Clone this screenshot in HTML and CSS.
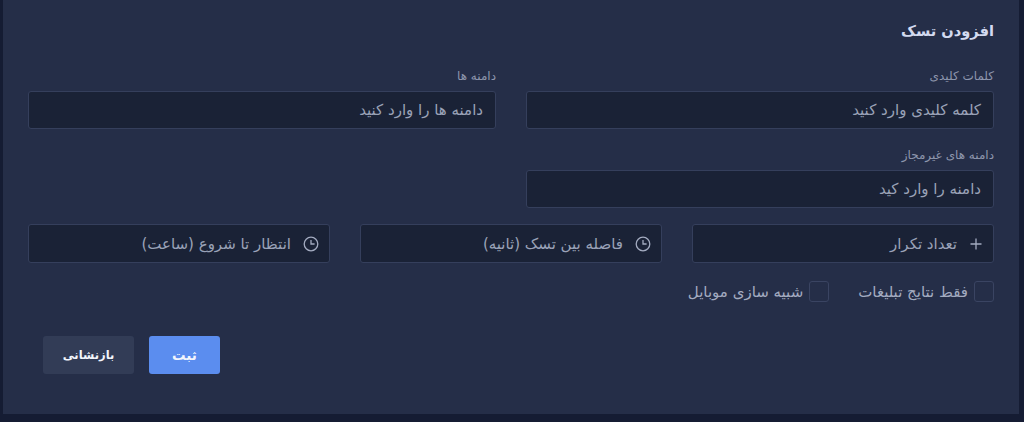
FILE: index.html
```html
<!DOCTYPE html>
<html lang="fa" dir="rtl">
<head>
<meta charset="utf-8">
<title>افزودن تسک</title>
<link rel="stylesheet" href="styles.css">
</head>
<body>
<main class="card">
  <h1 class="title">افزودن تسک</h1>
  <div class="grid-two">
    <div class="field">
      <div class="label">کلمات کلیدی</div>
      <div class="input"><span>کلمه کلیدی وارد کنید</span></div>
    </div>
    <div class="field">
      <div class="label">دامنه ها</div>
      <div class="input"><span>دامنه ها را وارد کنید</span></div>
    </div>
    <div class="field field-second">
      <div class="label">دامنه های غیرمجاز</div>
      <div class="input"><span>دامنه را وارد کید</span></div>
    </div>
  </div>
  <div class="grid-three">
    <div class="input input-icon">
      <svg class="icon" viewBox="0 0 14 14"><path d="M7 1.5v11M1.5 7h11"/></svg>
      <span>تعداد تکرار</span>
    </div>
    <div class="input input-icon">
      <svg class="icon icon-clock" viewBox="0 0 16 16"><circle cx="8" cy="8" r="6.8"/><path d="M8 4v4h3.6"/></svg>
      <span>فاصله بین تسک (ثانیه)</span>
    </div>
    <div class="input input-icon">
      <svg class="icon icon-clock" viewBox="0 0 16 16"><circle cx="8" cy="8" r="6.8"/><path d="M8 4v4h3.6"/></svg>
      <span>انتظار تا شروع (ساعت)</span>
    </div>
  </div>
  <div class="checks">
    <div class="check"><i class="box"></i><span>فقط نتایج تبلیغات</span></div>
    <div class="check"><i class="box"></i><span>شبیه سازی موبایل</span></div>
  </div>
  <div class="actions">
    <button class="btn btn-primary">ثبت</button>
    <button class="btn btn-secondary">بازنشانی</button>
  </div>
</main>
</body>
</html>
```
FILE: styles.css
```css
* { box-sizing: border-box; }
html, body { margin: 0; height: 422px; overflow: hidden; }
body {
  background: #151c33;
  font-family: "DejaVu Sans", "Noto Sans", sans-serif;
  color: #a3abc0;
  padding: 0 5px 8px 3px;
}
.card {
  background: #252e48;
  height: 414px;
  padding: 21px 25px 0 25px;
}
.title {
  margin: 0 0 28px;
  font-size: 14.6px;
  line-height: 20px;
  font-weight: 700;
  color: #d3daf0;
}
.grid-two {
  display: grid;
  grid-template-columns: 468px 468px;
  column-gap: 30px;
  row-gap: 19px;
}
.field-second { grid-column: 1; }
.label {
  font-size: 12px;
  line-height: 14px;
  margin-bottom: 8px;
  color: #8e96ad;
}
.input {
  display: flex;
  align-items: center;
  gap: 10px;
  height: 38px;
  padding: 0 12px;
  background: #1a2236;
  border: 1px solid #353f5c;
  border-radius: 3px;
  font-size: 15px;
  color: #9aa2b8;
}
.grid-three {
  display: grid;
  grid-template-columns: 302px 302px 302px;
  column-gap: 30px;
  margin-top: 16px;
}
.input-icon {
  height: 39px;
  padding-right: 10px;
  gap: 12px;
}
.icon {
  width: 14px;
  height: 14px;
  flex: none;
  fill: none;
  stroke: #a3abc0;
  stroke-width: 1.3;
}
.icon-clock {
  width: 16px;
  height: 16px;
}
.checks {
  display: flex;
  gap: 29px;
  margin-top: 18px;
}
.check {
  display: flex;
  align-items: center;
  gap: 6px;
  font-size: 15px;
  color: #a3abc0;
}
.box {
  display: block;
  width: 20px;
  height: 21px;
  border: 1px solid #3a4462;
  border-radius: 3px;
  background: #252e48;
}
.actions {
  display: flex;
  gap: 15px;
  margin-top: 34px;
  padding-right: 774px;
}
.btn {
  height: 38px;
  border: 0;
  border-radius: 3px;
  font-family: inherit;
  font-weight: 700;
  color: #f2f5fc;
}
.btn-primary { width: 71px; background: #5b8def; font-size: 13.5px; }
.btn-secondary { width: 91px; background: #323c56; font-size: 11.5px; }
```
